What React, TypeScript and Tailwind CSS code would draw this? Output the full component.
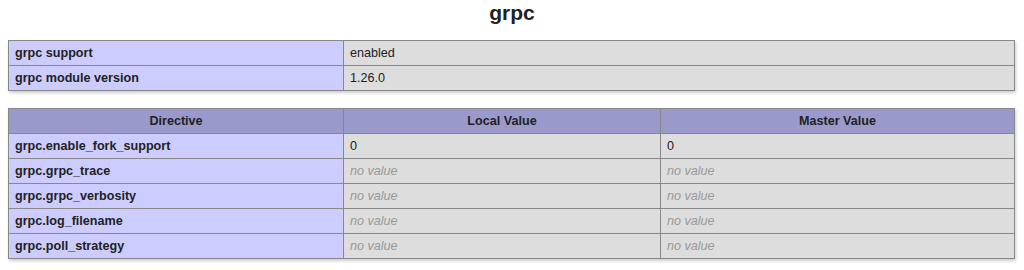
import React from "react";

const rows: [string, string | null, string | null][] = [
  ["grpc.enable_fork_support", "0", "0"],
  ["grpc.grpc_trace", null, null],
  ["grpc.grpc_verbosity", null, null],
  ["grpc.log_filename", null, null],
  ["grpc.poll_strategy", null, null],
];

function Val({ v }: { v: string | null }) {
  if (v === null) return <i className="text-[#999]">no value</i>;
  return <>{v}</>;
}

export default function App() {
  const cell = "border border-[#888] h-[25px] px-[6px] py-0 align-middle leading-[24px]";
  return (
    <div
      className="w-[1024px] h-[270px] bg-white text-[#222] text-[12.6px]"
      style={{ fontFamily: '"Liberation Sans", Arial, sans-serif' }}
    >
      <h2 className="text-center font-bold text-[21px] leading-[24px] pt-[1px] h-[40px]">grpc</h2>
      <div className="pl-[8px]">
        <table className="border-collapse w-[1007px] table-fixed shadow-[1px_2px_3px_#ccc]">
          <colgroup>
            <col className="w-[335px]" />
            <col />
          </colgroup>
          <tbody>
            <tr>
              <td className={`${cell} bg-[#ccccff] font-bold`}>grpc support</td>
              <td className={`${cell} bg-[#dddddd]`}>enabled</td>
            </tr>
            <tr>
              <td className={`${cell} bg-[#ccccff] font-bold`}>grpc module version</td>
              <td className={`${cell} bg-[#dddddd]`}>1.26.0</td>
            </tr>
          </tbody>
        </table>
        <div className="h-[17px]" />
        <table className="border-collapse w-[1007px] table-fixed shadow-[1px_2px_3px_#ccc]">
          <colgroup>
            <col className="w-[335px]" />
            <col className="w-[317px]" />
            <col />
          </colgroup>
          <thead>
            <tr>
              <th className={`${cell} bg-[#9999cc] font-bold text-center`}>Directive</th>
              <th className={`${cell} bg-[#9999cc] font-bold text-center`}>Local Value</th>
              <th className={`${cell} bg-[#9999cc] font-bold text-center`}>Master Value</th>
            </tr>
          </thead>
          <tbody>
            {rows.map(([k, l, m]) => (
              <tr key={k}>
                <td className={`${cell} bg-[#ccccff] font-bold`}>{k}</td>
                <td className={`${cell} bg-[#dddddd]`}>
                  <Val v={l} />
                </td>
                <td className={`${cell} bg-[#dddddd]`}>
                  <Val v={m} />
                </td>
              </tr>
            ))}
          </tbody>
        </table>
      </div>
    </div>
  );
}
